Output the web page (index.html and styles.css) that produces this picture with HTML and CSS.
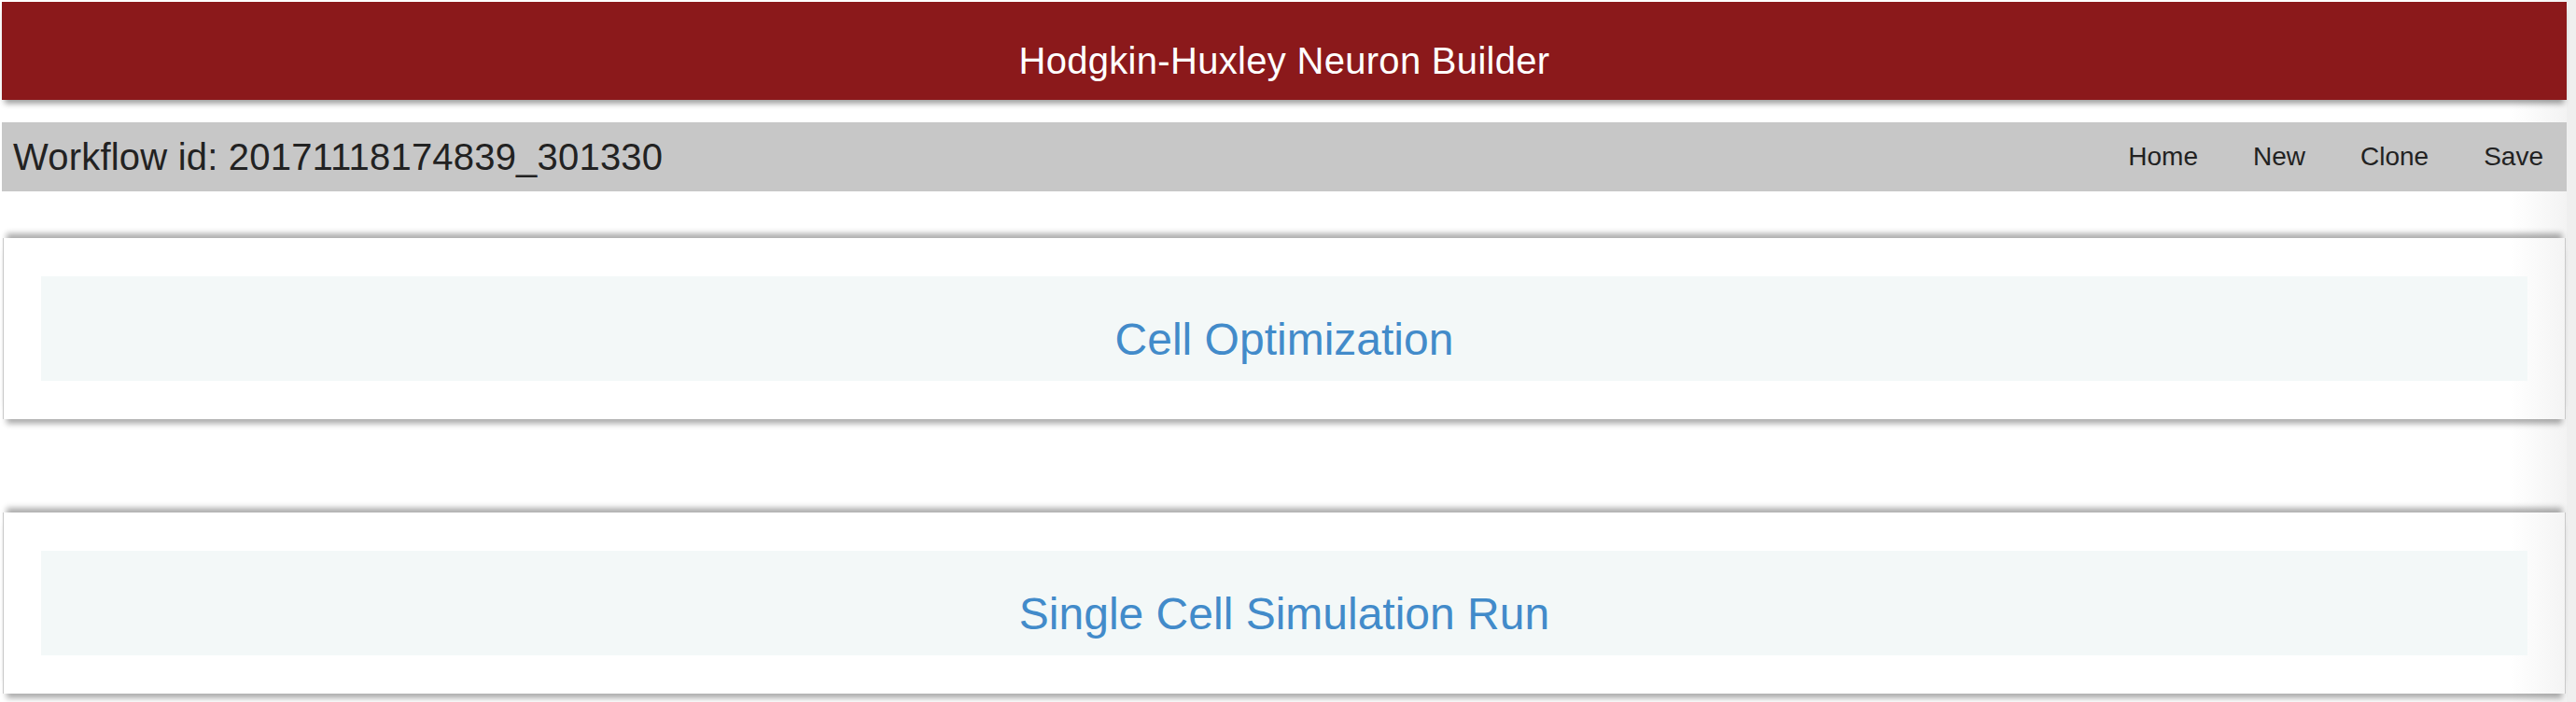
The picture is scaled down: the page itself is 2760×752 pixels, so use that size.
FILE: index.html
```html
<!DOCTYPE html>
<html>
<head>
<meta charset="utf-8">
<title>Hodgkin-Huxley Neuron Builder</title>
<link rel="stylesheet" href="styles.css">
</head>
<body>
<div class="page">
  <header class="app-header">
    <h1 class="app-title">Hodgkin-Huxley Neuron Builder</h1>
  </header>
  <nav class="toolbar">
    <div class="workflow-id">Workflow id: 20171118174839_301330</div>
    <ul class="toolbar-links">
      <li><a href="#">Home</a></li>
      <li><a href="#">New</a></li>
      <li><a href="#">Clone</a></li>
      <li><a href="#">Save</a></li>
    </ul>
  </nav>
  <main class="cards">
    <section class="card">
      <div class="card-panel"><a class="card-link" href="#">Cell Optimization</a></div>
    </section>
    <section class="card">
      <div class="card-panel"><a class="card-link" href="#">Single Cell Simulation Run</a></div>
    </section>
  </main>
</div>
</body>
</html>
```

FILE: styles.css
```css
html, body {
  margin: 0;
  padding: 0;
}
body {
  font-family: "Liberation Sans", Arial, sans-serif;
  background: linear-gradient(to right, #ffffff calc(100% - 70px), #f3f3f3 calc(100% - 10px), #efefef calc(100% - 10px)) fixed;
  height: 752px;
  overflow: hidden;
}
.page {
  width: 2748px;
  padding: 2px 0 0 2px;
}
.app-header {
  height: 105px;
  background: #8b191b;
  display: flex;
  align-items: center;
  justify-content: center;
  box-shadow: 0 7px 6px -3px rgba(0, 0, 0, 0.38);
  position: relative;
  z-index: 1;
}
.app-title {
  margin: 0;
  padding-top: 21px;
  font-weight: normal;
  font-size: 40px;
  color: #ffffff;
  letter-spacing: 0.3px;
}
.toolbar {
  margin-top: 24px;
  height: 74px;
  background: #c7c7c7;
  display: flex;
  align-items: center;
  justify-content: space-between;
  padding: 0 25px 0 12px;
}
.workflow-id {
  font-size: 40px;
  color: #222222;
  letter-spacing: 0.2px;
}
.toolbar-links {
  list-style: none;
  margin: 0;
  padding: 0;
  display: flex;
  gap: 59px;
}
.toolbar-links a {
  font-size: 28px;
  color: #222222;
  text-decoration: none;
}
.cards {
  display: flex;
  flex-direction: column;
  gap: 100px;
  margin-top: 50px;
}
.card {
  margin: 0 1px;
  border-left: 1px solid #c9c9c9;
  border-right: 1px solid #c9c9c9;
  padding: 41px 40px 41px 40px;
  background: linear-gradient(to right, #ffffff calc(100% - 70px), #f4f4f4 calc(100% - 12px)) fixed;
  box-shadow: 0 9px 6px -4px rgba(0, 0, 0, 0.32), 0 -9px 6px -4px rgba(0, 0, 0, 0.32);
}
.card-panel {
  height: 112px;
  background: #f3f8f8;
  display: flex;
  align-items: center;
  justify-content: center;
}
.card-link {
  font-size: 48px;
  color: #428bca;
  text-decoration: none;
  padding-top: 22px;
}
```
